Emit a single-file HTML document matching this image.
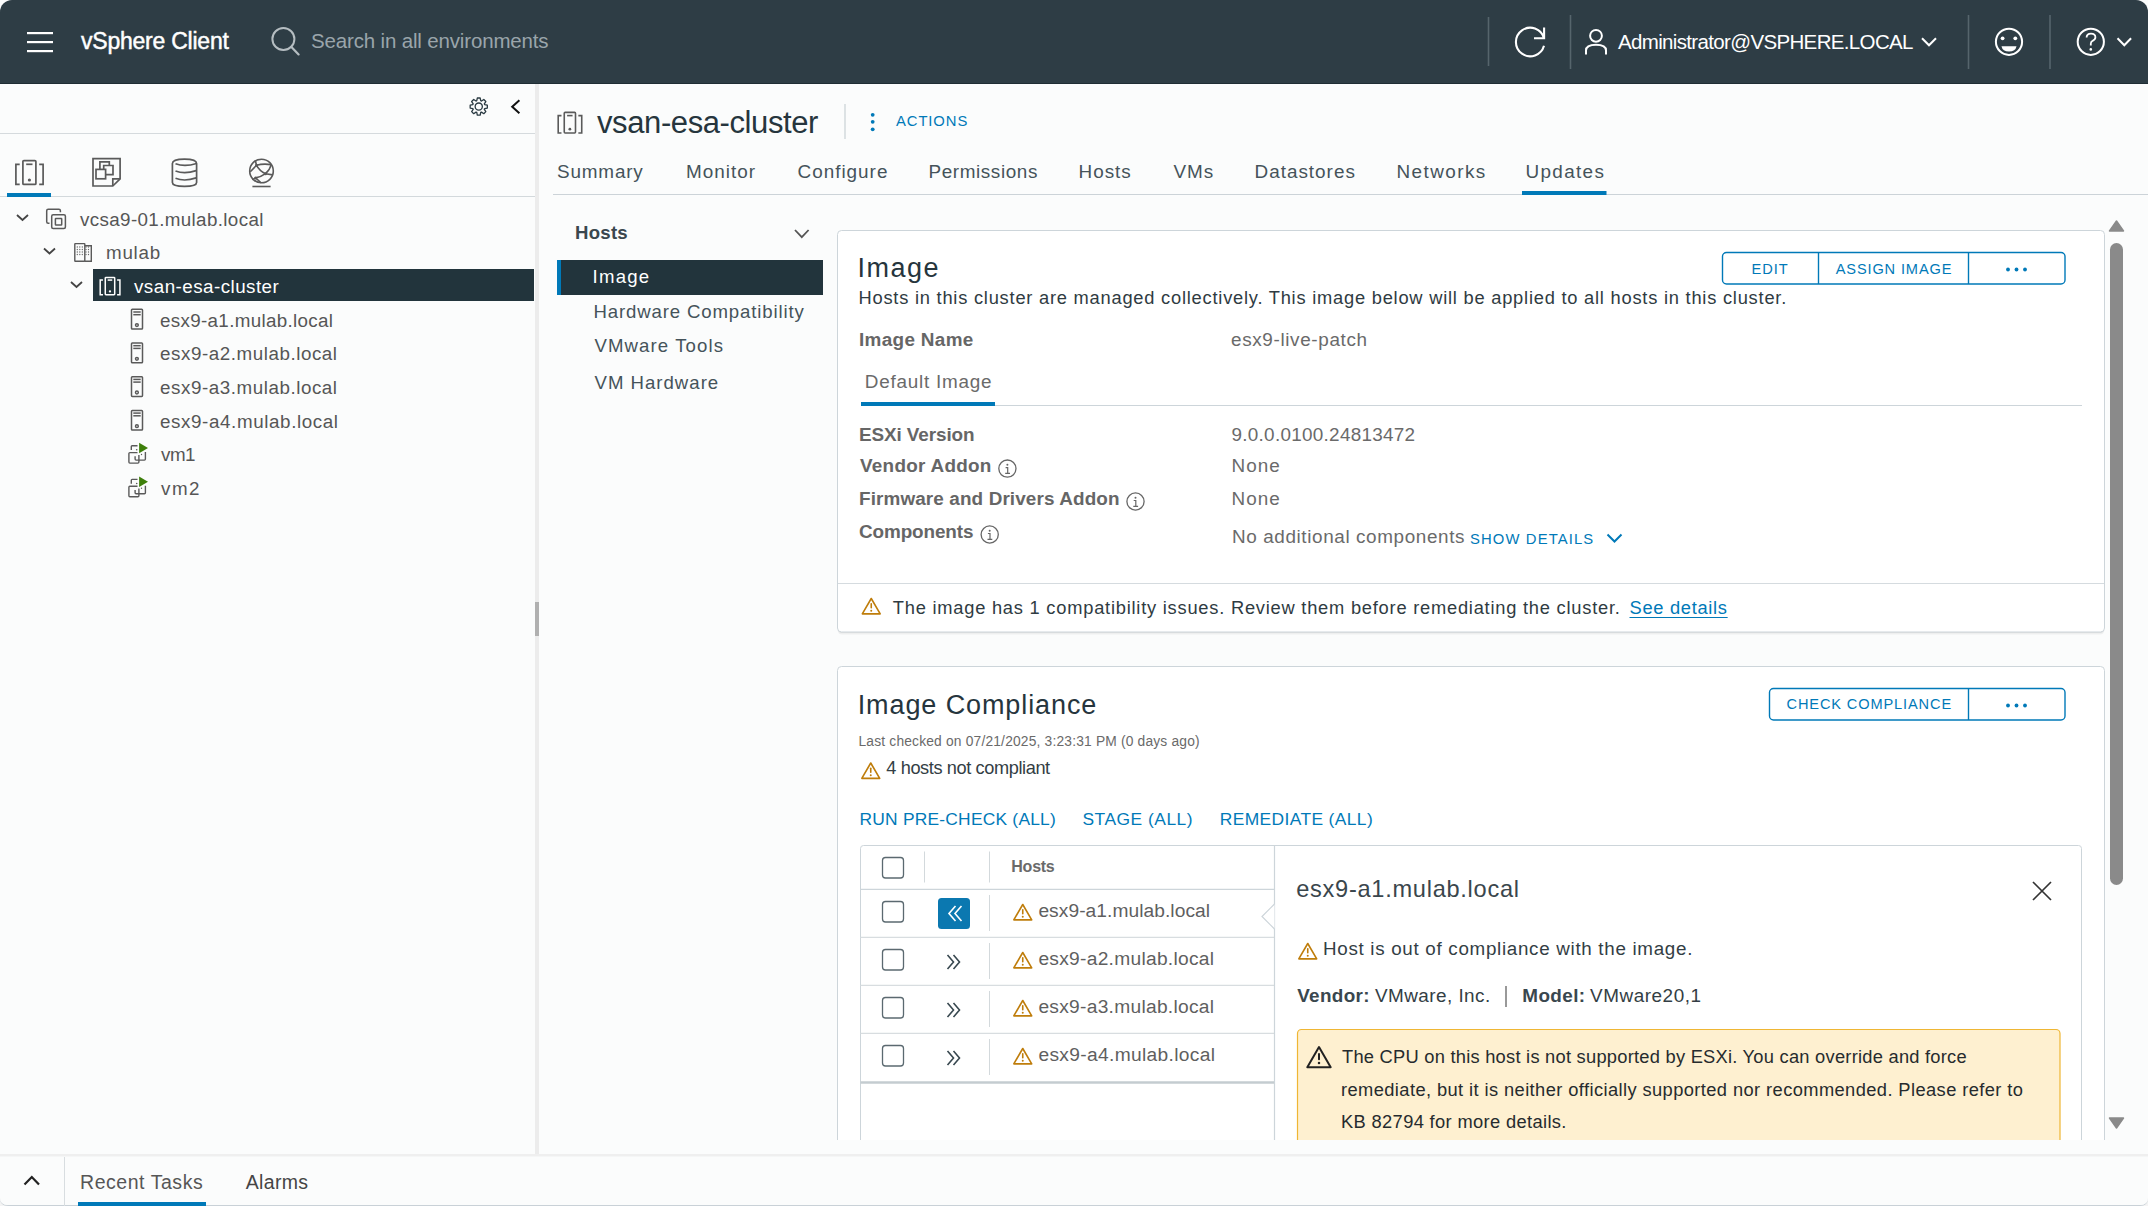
<!DOCTYPE html>
<html><head><meta charset="utf-8"><title>vSphere Client</title>
<style>
html,body{margin:0;padding:0;}
body{width:2148px;height:1206px;overflow:hidden;position:relative;background:#f4f4f4;font-family:"Liberation Sans",sans-serif;}
.t{position:absolute;white-space:nowrap;line-height:1;font-family:"Liberation Sans",sans-serif;}
</style></head><body>
<svg width="2148" height="1206" viewBox="0 0 2148 1206" style="position:absolute;left:0;top:0"><path d="M0 0 H2148 V1198 Q2148 1206 2140 1206 H8 Q0 1206 0 1198 Z" fill="#c9d1d7"/><path d="M0 0 H2148 V1197 Q2148 1205 2140 1205 H8 Q0 1205 0 1197 Z" fill="#fbfcfc"/><path d="M0 84 V12 A12 12 0 0 1 12 0 H2136 A12 12 0 0 1 2148 12 V84 Z" fill="#2e3d45"/><line x1="0" y1="83.5" x2="2148" y2="83.5" stroke="#1f2d34" stroke-width="1" /><rect x="27" y="32" width="26" height="2.2" fill="#fff" /><rect x="27" y="41" width="26" height="2.2" fill="#fff" /><rect x="27" y="50" width="26" height="2.2" fill="#fff" /><circle cx="283.4" cy="39" r="11" stroke="#b5bdc1" stroke-width="2" fill="none"/><line x1="291.2" y1="46.8" x2="298.6" y2="54.4" stroke="#b5bdc1" stroke-width="2.2" stroke-linecap="round"/><line x1="1488.5" y1="17" x2="1488.5" y2="66" stroke="#56656c" stroke-width="1.6" /><line x1="1570.5" y1="15" x2="1570.5" y2="69" stroke="#56656c" stroke-width="1.6" /><line x1="1968.5" y1="15" x2="1968.5" y2="69" stroke="#56656c" stroke-width="1.6" /><line x1="2050" y1="15" x2="2050" y2="69" stroke="#56656c" stroke-width="1.6" /><path d="M1544 45.8 A14.3 14.3 0 1 1 1544 38.2" stroke="#fff" stroke-width="2.1" fill="none" /><path d="M1534 38.2 H1544.1 V27.6" stroke="#fff" stroke-width="2.1" fill="none" /><circle cx="1596" cy="35.8" r="5.9" stroke="#fff" stroke-width="2" fill="none"/><path d="M1586 54.5 V50.5 Q1586 44.8 1596 44.8 Q1606 44.8 1606 50.5 V54.5" stroke="#fff" stroke-width="2" fill="none" /><path d="M1922 38.3 L1929 45.3 L1936 38.3" stroke="#fff" stroke-width="2" fill="none" /><path d="M2117.5 38.3 L2124.3 45.3 L2131.1 38.3" stroke="#fff" stroke-width="2" fill="none" /><circle cx="2009" cy="41.8" r="13.1" stroke="#fff" stroke-width="2" fill="none"/><circle cx="2002.6" cy="38.3" r="1.9" fill="#fff"/><circle cx="2015.3" cy="38.3" r="1.9" fill="#fff"/><path d="M2001.5 46.3 H2016.5 Q2015.5 51.5 2009 51.5 Q2002.5 51.5 2001.5 46.3 Z" stroke="none" stroke-width="0" fill="#fff" /><circle cx="2090.8" cy="41.8" r="13.1" stroke="#fff" stroke-width="2" fill="none"/><path d="M2086.6 37.6 Q2086.6 33.6 2091 33.6 Q2095.4 33.6 2095.4 37.2 Q2095.4 39.6 2092.6 40.8 Q2090.8 41.7 2090.8 43.8 V45.6" stroke="#fff" stroke-width="1.8" fill="none" /><circle cx="2090.8" cy="49.4" r="1.3" fill="#fff"/><line x1="0" y1="133.5" x2="535" y2="133.5" stroke="#d5dadd" stroke-width="1" /><path d="M476.76 100.73 L477.32 98.02 L480.18 98.02 L480.74 100.73 L481.50 101.04 L483.81 99.52 L485.83 101.54 L484.31 103.85 L484.62 104.61 L487.33 105.17 L487.33 108.03 L484.62 108.59 L484.31 109.35 L485.83 111.66 L483.81 113.68 L481.50 112.16 L480.74 112.47 L480.18 115.18 L477.32 115.18 L476.76 112.47 L476.00 112.16 L473.69 113.68 L471.67 111.66 L473.19 109.35 L472.88 108.59 L470.17 108.03 L470.17 105.17 L472.88 104.61 L473.19 103.85 L471.67 101.54 L473.69 99.52 L476.00 101.04 Z" stroke="#2a3a42" stroke-width="1.3" fill="none" stroke-linejoin="round"/><circle cx="478.75" cy="106.6" r="3.6" stroke="#2a3a42" stroke-width="1.3" fill="none"/><path d="M519.4 100.2 L512.2 106.7 L519.4 113.3" stroke="#111" stroke-width="2" fill="none" /><line x1="0" y1="196.5" x2="535" y2="196.5" stroke="#d3d9dc" stroke-width="1" /><rect x="7" y="193" width="44" height="4" fill="#0079b8" /><g transform="translate(15.9 160.6) scale(1.0)" stroke="#5a5a5a" stroke-width="1.7" fill="none" stroke-linecap="butt"><path d="M3.8 3.7 H0 V23.8 H3.8"/><path d="M23.3 3.7 H27.2 V23.8 H23.3"/><rect x="7" y="0" width="13" height="23.8" rx="1"/><line x1="10.3" y1="3.7" x2="16.6" y2="3.7"/><circle cx="13.5" cy="19.4" r="1.6" fill="#5a5a5a" stroke="none"/></g><g stroke="#5a5a5a" stroke-width="1.7" fill="none"><path d="M93 158.6 H120.1 V178.8 L112.8 186 H93 Z"/><path d="M112.8 186 V178.8 H120.1"/><path d="M99.9 169.4 V161.8 H109.3 V165.5"/><path d="M105.6 174.7 H113 V165.5 H103.7 V169.4"/><rect x="96" y="169.4" width="9.6" height="9.4"/></g><g stroke="#5a5a5a" stroke-width="1.7" fill="none"><path d="M172.4 163.5 Q172.4 159.1 184.5 159.1 Q196.6 159.1 196.6 163.5 V182.5 Q196.6 186.4 184.5 186.4 Q172.4 186.4 172.4 182.5 Z"/><path d="M175.5 163.7 Q184.5 167.2 196.6 163.5"/><path d="M175.5 171 Q184.5 174.6 196.2 170.6"/><path d="M175.5 178.3 Q184.5 181.9 196.2 177.9"/></g><g stroke="#5a5a5a" stroke-width="1.6" fill="none"><circle cx="261.5" cy="171" r="11.8"/><path d="M255.3 160.5 L256.5 165.3 L250.3 171.8"/><path d="M256.5 165.3 Q263 163.3 271.2 164.6"/><path d="M256.5 165.3 Q259.5 170.8 265.5 173.7 L272.8 174.9"/><path d="M271.2 164.6 Q269.8 170 265.5 173.7 Q261 177 255.6 177.9 L252.3 179.6"/><path d="M255.6 177.9 L261.3 183"/><line x1="252.4" y1="186.5" x2="270.6" y2="186.5"/></g><circle cx="256.5" cy="165.3" r="1.5" fill="#5a5a5a"/><circle cx="265.5" cy="173.7" r="1.5" fill="#5a5a5a"/><circle cx="255.6" cy="177.9" r="1.5" fill="#5a5a5a"/><rect x="93" y="269" width="441" height="32" fill="#22343c" /><path d="M17.0 215.0 L22.5 220.0 L28.0 215.0" stroke="#444" stroke-width="1.8" fill="none" /><path d="M44.0 248.5 L49.5 253.5 L55.0 248.5" stroke="#444" stroke-width="1.8" fill="none" /><path d="M71.0 282.0 L76.5 287.0 L82.0 282.0" stroke="#444" stroke-width="1.8" fill="none" /><g stroke="#5a5a5a" stroke-width="1.5" fill="none"><path d="M49.5 223.2 H48.2 Q46.7 223.2 46.7 221.7 V210.7 Q46.7 209.2 48.2 209.2 H58.9 Q60.4 209.2 60.4 210.7 V212.2"/><rect x="51.7" y="214.7" width="13.7" height="13.9" rx="1.5"/><rect x="55.4" y="218.4" width="6.3" height="6.7" rx="0.5"/></g><g stroke="#5a5a5a" stroke-width="1.4" fill="none"><rect x="74.8" y="243.6" width="10" height="17.6" rx="0.5"/><path d="M84.8 245.8 H91.3 V261.2 H84.8"/></g><circle cx="77.3" cy="247" r="0.65" fill="#666"/><circle cx="79.8" cy="247" r="0.65" fill="#666"/><circle cx="82.3" cy="247" r="0.65" fill="#666"/><circle cx="86" cy="247" r="0.65" fill="#666"/><circle cx="88.5" cy="247" r="0.65" fill="#666"/><circle cx="77.3" cy="249.5" r="0.65" fill="#666"/><circle cx="79.8" cy="249.5" r="0.65" fill="#666"/><circle cx="82.3" cy="249.5" r="0.65" fill="#666"/><circle cx="86" cy="249.5" r="0.65" fill="#666"/><circle cx="88.5" cy="249.5" r="0.65" fill="#666"/><circle cx="77.3" cy="252" r="0.65" fill="#666"/><circle cx="79.8" cy="252" r="0.65" fill="#666"/><circle cx="82.3" cy="252" r="0.65" fill="#666"/><circle cx="86" cy="252" r="0.65" fill="#666"/><circle cx="88.5" cy="252" r="0.65" fill="#666"/><circle cx="77.3" cy="254.5" r="0.65" fill="#666"/><circle cx="79.8" cy="254.5" r="0.65" fill="#666"/><circle cx="82.3" cy="254.5" r="0.65" fill="#666"/><circle cx="86" cy="254.5" r="0.65" fill="#666"/><circle cx="88.5" cy="254.5" r="0.65" fill="#666"/><g transform="translate(100.2 277.4) scale(0.725)" stroke="#ffffff" stroke-width="2.0689655172413794" fill="none" stroke-linecap="butt"><path d="M3.8 3.7 H0 V23.8 H3.8"/><path d="M23.3 3.7 H27.2 V23.8 H23.3"/><rect x="7" y="0" width="13" height="23.8" rx="1"/><line x1="10.3" y1="3.7" x2="16.6" y2="3.7"/><circle cx="13.5" cy="19.4" r="1.6" fill="#ffffff" stroke="none"/></g><g stroke="#5a5a5a" stroke-width="1.5" fill="none"><rect x="131.5" y="309.3" width="11" height="19.7" rx="0.8"/><line x1="133.3" y1="312.0" x2="140.7" y2="312.0"/><line x1="133.3" y1="314.7" x2="140.7" y2="314.7"/><circle cx="136.9" cy="325.1" r="1.4"/></g><g stroke="#5a5a5a" stroke-width="1.5" fill="none"><rect x="131.5" y="343.0" width="11" height="19.7" rx="0.8"/><line x1="133.3" y1="345.7" x2="140.7" y2="345.7"/><line x1="133.3" y1="348.4" x2="140.7" y2="348.4"/><circle cx="136.9" cy="358.8" r="1.4"/></g><g stroke="#5a5a5a" stroke-width="1.5" fill="none"><rect x="131.5" y="376.70000000000005" width="11" height="19.7" rx="0.8"/><line x1="133.3" y1="379.40000000000003" x2="140.7" y2="379.40000000000003"/><line x1="133.3" y1="382.1" x2="140.7" y2="382.1"/><circle cx="136.9" cy="392.50000000000006" r="1.4"/></g><g stroke="#5a5a5a" stroke-width="1.5" fill="none"><rect x="131.5" y="410.40000000000003" width="11" height="19.7" rx="0.8"/><line x1="133.3" y1="413.1" x2="140.7" y2="413.1"/><line x1="133.3" y1="415.8" x2="140.7" y2="415.8"/><circle cx="136.9" cy="426.20000000000005" r="1.4"/></g><g transform="translate(0 0)"><g stroke="#5a5a5a" stroke-width="1.4" fill="none"><path d="M131.3 450.1 V446.5 Q131.3 445.7 132.1 445.7 H137.5"/><path d="M137.5 452.6 H129.9 Q128.9 452.6 128.9 453.6 V462.1 Q128.9 463.1 129.9 463.1 H137.9 Q138.9 463.1 138.9 462.1 V454.9"/><path d="M135.1 456.2 V459.1 Q135.1 460.1 136.1 460.1 H144.4 Q145.4 460.1 145.4 459.1 V452.1"/></g><circle cx="136.7" cy="449.8" r="0.8" fill="#5a5a5a"/><circle cx="141.5" cy="454.5" r="0.7" fill="#5a5a5a"/><path d="M139.1 442.8 L148 448 L139.1 453.2 Z" fill="#3d7f0a"/></g><g transform="translate(0 33.7)"><g stroke="#5a5a5a" stroke-width="1.4" fill="none"><path d="M131.3 450.1 V446.5 Q131.3 445.7 132.1 445.7 H137.5"/><path d="M137.5 452.6 H129.9 Q128.9 452.6 128.9 453.6 V462.1 Q128.9 463.1 129.9 463.1 H137.9 Q138.9 463.1 138.9 462.1 V454.9"/><path d="M135.1 456.2 V459.1 Q135.1 460.1 136.1 460.1 H144.4 Q145.4 460.1 145.4 459.1 V452.1"/></g><circle cx="136.7" cy="449.8" r="0.8" fill="#5a5a5a"/><circle cx="141.5" cy="454.5" r="0.7" fill="#5a5a5a"/><path d="M139.1 442.8 L148 448 L139.1 453.2 Z" fill="#3d7f0a"/></g><rect x="535" y="84" width="4" height="1071" fill="#ececec" /><rect x="535" y="602" width="4" height="34" fill="#b0b0b0" /><g transform="translate(558.2 112.4) scale(0.865)" stroke="#5a5a5a" stroke-width="1.8497109826589597" fill="none" stroke-linecap="butt"><path d="M3.8 3.7 H0 V23.8 H3.8"/><path d="M23.3 3.7 H27.2 V23.8 H23.3"/><rect x="7" y="0" width="13" height="23.8" rx="1"/><line x1="10.3" y1="3.7" x2="16.6" y2="3.7"/><circle cx="13.5" cy="19.4" r="1.6" fill="#5a5a5a" stroke="none"/></g><line x1="845" y1="104" x2="845" y2="139" stroke="#c9d0d4" stroke-width="1.2" /><circle cx="872.7" cy="114.8" r="1.9" fill="#0079b8"/><circle cx="872.7" cy="121.8" r="1.9" fill="#0079b8"/><circle cx="872.7" cy="129.3" r="1.9" fill="#0079b8"/><line x1="553" y1="194.5" x2="2148" y2="194.5" stroke="#ccd3d8" stroke-width="1.2" /><rect x="1522" y="191" width="84.5" height="4" fill="#0079b8" /><path d="M795 230 L801.8 237.2 L808.6 230" stroke="#555" stroke-width="1.8" fill="none" /><rect x="557" y="260" width="266" height="35" fill="#22343c" /><rect x="557" y="260" width="4" height="35" fill="#0079b8" /><rect x="838" y="233" width="1266" height="401.5" rx="4" fill="#000" opacity="0.05"/><rect x="838" y="232" width="1266" height="401" rx="4" fill="#000" opacity="0.06"/><rect x="837.5" y="230.5" width="1267" height="401.5" rx="4" fill="#fff" stroke="#cdd5da" stroke-width="1"/><rect x="1722.5" y="252.5" width="342.5" height="31.5" rx="4" fill="#fff" stroke="#0079b8" stroke-width="1.4"/><line x1="1818.5" y1="252.5" x2="1818.5" y2="284" stroke="#0079b8" stroke-width="1.4" /><line x1="1968.5" y1="252.5" x2="1968.5" y2="284" stroke="#0079b8" stroke-width="1.4" /><circle cx="2008" cy="269.5" r="1.9" fill="#0079b8"/><circle cx="2016.5" cy="269.5" r="1.9" fill="#0079b8"/><circle cx="2025" cy="269.5" r="1.9" fill="#0079b8"/><line x1="861" y1="405.5" x2="2082" y2="405.5" stroke="#cdd5da" stroke-width="1" /><rect x="861" y="402" width="134" height="4" fill="#0079b8" /><circle cx="1007.4" cy="468.6" r="8.6" stroke="#666" stroke-width="1.3" fill="none"/><circle cx="1007.4" cy="464.8" r="1" fill="#666"/><path d="M1005.6 467.6 H1007.6999999999999 V473.40000000000003 M1005.1999999999999 473.40000000000003 H1010.0" stroke="#666" stroke-width="1.2" fill="none" /><circle cx="1135.5" cy="501.5" r="8.6" stroke="#666" stroke-width="1.3" fill="none"/><circle cx="1135.5" cy="497.7" r="1" fill="#666"/><path d="M1133.7 500.5 H1135.8 V506.3 M1133.3 506.3 H1138.1" stroke="#666" stroke-width="1.2" fill="none" /><circle cx="989.7" cy="534.5" r="8.6" stroke="#666" stroke-width="1.3" fill="none"/><circle cx="989.7" cy="530.7" r="1" fill="#666"/><path d="M987.9000000000001 533.5 H990.0 V539.3 M987.5 539.3 H992.3000000000001" stroke="#666" stroke-width="1.2" fill="none" /><path d="M1607.5 534.5 L1614.5 541.5 L1621.5 534.5" stroke="#0079b8" stroke-width="2" fill="none" /><line x1="838" y1="583.5" x2="2104" y2="583.5" stroke="#d5dbdf" stroke-width="1" /><g stroke="#bf7d0b" stroke-width="1.6" fill="none" stroke-linejoin="round" stroke-linecap="round"><path d="M871.25 598.5 L880.2 613.86 H862.3 Z"/><line x1="871.25" y1="603.6776" x2="871.25" y2="607.796"/></g><circle cx="871.25" cy="610.7132" r="0.992" fill="#bf7d0b"/><rect x="838" y="668" width="1266" height="480" rx="4" fill="#000" opacity="0.06"/><rect x="837.5" y="666.5" width="1267" height="480" rx="4" fill="#fff" stroke="#cdd5da" stroke-width="1"/><rect x="1769.5" y="688.5" width="295.5" height="31.5" rx="4" fill="#fff" stroke="#0079b8" stroke-width="1.4"/><line x1="1968.5" y1="688.5" x2="1968.5" y2="720" stroke="#0079b8" stroke-width="1.4" /><circle cx="2008" cy="705.5" r="1.9" fill="#0079b8"/><circle cx="2016.5" cy="705.5" r="1.9" fill="#0079b8"/><circle cx="2025" cy="705.5" r="1.9" fill="#0079b8"/><g stroke="#bf7d0b" stroke-width="1.6" fill="none" stroke-linejoin="round" stroke-linecap="round"><path d="M870.75 763 L879.7 778.36 H861.8 Z"/><line x1="870.75" y1="768.1776" x2="870.75" y2="772.296"/></g><circle cx="870.75" cy="775.2132" r="0.992" fill="#bf7d0b"/><rect x="860.5" y="845.5" width="1221" height="300" rx="3" fill="#fff" stroke="#cdd5da" stroke-width="1"/><line x1="860.5" y1="889.3" x2="1274" y2="889.3" stroke="#cdd5da" stroke-width="1.2" /><line x1="860.5" y1="937.3" x2="1274" y2="937.3" stroke="#d8dde0" stroke-width="1.2" /><line x1="860.5" y1="985.3" x2="1274" y2="985.3" stroke="#d8dde0" stroke-width="1.2" /><line x1="860.5" y1="1033.3" x2="1274" y2="1033.3" stroke="#d8dde0" stroke-width="1.2" /><line x1="860.5" y1="1082.5" x2="1274" y2="1082.5" stroke="#c4ccd0" stroke-width="2.4" /><line x1="924.5" y1="851.5" x2="924.5" y2="882.5" stroke="#d3d9dc" stroke-width="1" /><line x1="989.5" y1="851.5" x2="989.5" y2="882.5" stroke="#d3d9dc" stroke-width="1" /><line x1="989.5" y1="895" x2="989.5" y2="931" stroke="#d3d9dc" stroke-width="1" /><line x1="989.5" y1="943" x2="989.5" y2="979" stroke="#d3d9dc" stroke-width="1" /><line x1="989.5" y1="991" x2="989.5" y2="1027" stroke="#d3d9dc" stroke-width="1" /><line x1="989.5" y1="1039" x2="989.5" y2="1075" stroke="#d3d9dc" stroke-width="1" /><rect x="882.5" y="857.5" width="21" height="20.5" rx="3" fill="#fff" stroke="#5b6970" stroke-width="1.3"/><rect x="882.5" y="901.5" width="21" height="20.5" rx="3" fill="#fff" stroke="#5b6970" stroke-width="1.3"/><rect x="882.5" y="949.5" width="21" height="20.5" rx="3" fill="#fff" stroke="#5b6970" stroke-width="1.3"/><rect x="882.5" y="997.5" width="21" height="20.5" rx="3" fill="#fff" stroke="#5b6970" stroke-width="1.3"/><rect x="882.5" y="1045.5" width="21" height="20.5" rx="3" fill="#fff" stroke="#5b6970" stroke-width="1.3"/><rect x="938" y="898" width="32" height="31" rx="3.5" fill="#0b78b0"/><path d="M955.5 906 L949 913.5 L955.5 921 M961.5 906 L955 913.5 L961.5 921" stroke="#fff" stroke-width="1.6" fill="none" /><path d="M947.5 955 L953.5 962 L947.5 969 M953.5 955 L959.5 962 L953.5 969" stroke="#37474f" stroke-width="1.6" fill="none" /><path d="M947.5 1003 L953.5 1010 L947.5 1017 M953.5 1003 L959.5 1010 L953.5 1017" stroke="#37474f" stroke-width="1.6" fill="none" /><path d="M947.5 1051 L953.5 1058 L947.5 1065 M953.5 1051 L959.5 1058 L953.5 1065" stroke="#37474f" stroke-width="1.6" fill="none" /><g stroke="#bf7d0b" stroke-width="1.6" fill="none" stroke-linejoin="round" stroke-linecap="round"><path d="M1022.75 904.5 L1031.7 919.86 H1013.8 Z"/><line x1="1022.75" y1="909.6776" x2="1022.75" y2="913.796"/></g><circle cx="1022.75" cy="916.7132" r="0.992" fill="#bf7d0b"/><g stroke="#bf7d0b" stroke-width="1.6" fill="none" stroke-linejoin="round" stroke-linecap="round"><path d="M1022.75 952.5 L1031.7 967.86 H1013.8 Z"/><line x1="1022.75" y1="957.6776" x2="1022.75" y2="961.796"/></g><circle cx="1022.75" cy="964.7132" r="0.992" fill="#bf7d0b"/><g stroke="#bf7d0b" stroke-width="1.6" fill="none" stroke-linejoin="round" stroke-linecap="round"><path d="M1022.75 1000.5 L1031.7 1015.86 H1013.8 Z"/><line x1="1022.75" y1="1005.6776" x2="1022.75" y2="1009.796"/></g><circle cx="1022.75" cy="1012.7132" r="0.992" fill="#bf7d0b"/><g stroke="#bf7d0b" stroke-width="1.6" fill="none" stroke-linejoin="round" stroke-linecap="round"><path d="M1022.75 1048.5 L1031.7 1063.8600000000001 H1013.8 Z"/><line x1="1022.75" y1="1053.6776" x2="1022.75" y2="1057.796"/></g><circle cx="1022.75" cy="1060.7132" r="0.992" fill="#bf7d0b"/><line x1="1274.5" y1="845.5" x2="1274.5" y2="1146" stroke="#cdd5da" stroke-width="1.2" /><path d="M1274.5 904 L1262 916.5 L1274.5 929" fill="#fff" stroke="#cdd5da" stroke-width="1.2"/><path d="M2033 882 L2051 900 M2051 882 L2033 900" stroke="#333" stroke-width="1.7" fill="none" /><g stroke="#bf7d0b" stroke-width="1.6" fill="none" stroke-linejoin="round" stroke-linecap="round"><path d="M1307.75 943.5 L1316.7 958.86 H1298.8 Z"/><line x1="1307.75" y1="948.6776" x2="1307.75" y2="952.796"/></g><circle cx="1307.75" cy="955.7132" r="0.992" fill="#bf7d0b"/><line x1="1506" y1="986" x2="1506" y2="1007" stroke="#777" stroke-width="1.5" /><rect x="1297.5" y="1029.5" width="762.5" height="116" rx="4" fill="#fef0d0" stroke="#efb634" stroke-width="1.2"/><g stroke="#222" stroke-width="2" fill="none" stroke-linejoin="round" stroke-linecap="round"><path d="M1319.0 1047 L1330.7 1067.2 H1307.3 Z"/><line x1="1319.0" y1="1053.92" x2="1319.0" y2="1059.2"/></g><circle cx="1319.0" cy="1062.94" r="1.24" fill="#222"/><rect x="539" y="1140" width="1609" height="14" fill="#fbfcfc" /><path d="M0 1156 H2148 V1197 Q2148 1205 2140 1205 H8 Q0 1205 0 1197 Z" fill="#fbfcfc"/><path d="M2116.5 221 L2123.5 231 H2109.5 Z" fill="#8a8a8a" stroke="#8a8a8a" stroke-width="1.5" stroke-linejoin="round"/><rect x="2110" y="243" width="13" height="642" rx="6.5" fill="#8a8a8a"/><path d="M2116.5 1128 L2123.5 1118 H2109.5 Z" fill="#8a8a8a" stroke="#8a8a8a" stroke-width="1.5" stroke-linejoin="round"/><rect x="0" y="1154" width="2148" height="2.5" fill="#efefef" /><line x1="64.5" y1="1157" x2="64.5" y2="1206" stroke="#d8dde0" stroke-width="1" /><path d="M24.5 1184.5 L31.8 1177 L39 1184.5" stroke="#222" stroke-width="2.2" fill="none" /><rect x="78" y="1202" width="128" height="4" fill="#0079b8" /></svg>
<div class="t" style="left:81.00px;top:29.53px;font-size:23px;letter-spacing:-0.231px;color:#ffffff;-webkit-text-stroke:0.45px #fff">vSphere Client</div><div class="t" style="left:311.00px;top:30.85px;font-size:20.5px;letter-spacing:-0.16px;color:#9aa5ab;">Search in all environments</div><div class="t" style="left:1618.00px;top:32.15px;font-size:20.5px;letter-spacing:-0.654px;color:#ffffff;">Administrator@VSPHERE.LOCAL</div><div class="t" style="left:80.00px;top:210.69px;font-size:18.8px;letter-spacing:0.368px;color:#565656;">vcsa9-01.mulab.local</div><div class="t" style="left:106.00px;top:244.19px;font-size:18.8px;letter-spacing:0.75px;color:#565656;">mulab</div><div class="t" style="left:134.00px;top:277.69px;font-size:18.8px;letter-spacing:0.467px;color:#ffffff;">vsan-esa-cluster</div><div class="t" style="left:160.00px;top:311.69px;font-size:18.8px;letter-spacing:0.333px;color:#565656;">esx9-a1.mulab.local</div><div class="t" style="left:160.00px;top:345.39px;font-size:18.8px;letter-spacing:0.556px;color:#565656;">esx9-a2.mulab.local</div><div class="t" style="left:160.00px;top:379.09px;font-size:18.8px;letter-spacing:0.556px;color:#565656;">esx9-a3.mulab.local</div><div class="t" style="left:160.00px;top:412.79px;font-size:18.8px;letter-spacing:0.611px;color:#565656;">esx9-a4.mulab.local</div><div class="t" style="left:161.00px;top:446.19px;font-size:18.8px;letter-spacing:-0.5px;color:#565656;">vm1</div><div class="t" style="left:161.00px;top:479.69px;font-size:18.8px;letter-spacing:1.5px;color:#565656;">vm2</div><div class="t" style="left:597.00px;top:106.86px;font-size:31px;letter-spacing:-0.4px;color:#26353d;">vsan-esa-cluster</div><div class="t" style="left:896.00px;top:114.07px;font-size:14.8px;letter-spacing:0.917px;color:#0079b8;">ACTIONS</div><div class="t" style="left:557.00px;top:162.60px;font-size:18.9px;letter-spacing:0.833px;color:#45535a;">Summary</div><div class="t" style="left:686.00px;top:162.60px;font-size:18.9px;letter-spacing:1.0px;color:#45535a;">Monitor</div><div class="t" style="left:797.50px;top:162.60px;font-size:18.9px;letter-spacing:1.0px;color:#45535a;">Configure</div><div class="t" style="left:928.50px;top:162.60px;font-size:18.9px;letter-spacing:0.6px;color:#45535a;">Permissions</div><div class="t" style="left:1078.50px;top:162.60px;font-size:18.9px;letter-spacing:1.0px;color:#45535a;">Hosts</div><div class="t" style="left:1173.50px;top:162.60px;font-size:18.9px;letter-spacing:1.0px;color:#45535a;">VMs</div><div class="t" style="left:1254.50px;top:162.60px;font-size:18.9px;letter-spacing:1.0px;color:#45535a;">Datastores</div><div class="t" style="left:1396.50px;top:162.60px;font-size:18.9px;letter-spacing:1.429px;color:#45535a;">Networks</div><div class="t" style="left:1525.50px;top:162.60px;font-size:18.9px;letter-spacing:1.333px;color:#45535a;">Updates</div><div class="t" style="left:575.00px;top:223.86px;font-size:18.6px;letter-spacing:0.25px;color:#3a474e;font-weight:bold;">Hosts</div><div class="t" style="left:592.50px;top:267.86px;font-size:18.6px;letter-spacing:1.25px;color:#ffffff;">Image</div><div class="t" style="left:593.50px;top:302.86px;font-size:18.6px;letter-spacing:0.857px;color:#45535a;">Hardware Compatibility</div><div class="t" style="left:594.50px;top:337.46px;font-size:18.6px;letter-spacing:1.091px;color:#45535a;">VMware Tools</div><div class="t" style="left:594.50px;top:373.66px;font-size:18.6px;letter-spacing:1.0px;color:#45535a;">VM Hardware</div><div class="t" style="left:857.50px;top:255.24px;font-size:27px;letter-spacing:1.5px;color:#26353d;">Image</div><div class="t" style="left:1751.50px;top:261.54px;font-size:14.6px;letter-spacing:1.0px;color:#0079b8;">EDIT</div><div class="t" style="left:1835.70px;top:261.54px;font-size:14.6px;letter-spacing:0.864px;color:#0079b8;">ASSIGN IMAGE</div><div class="t" style="left:858.50px;top:289.11px;font-size:18.3px;letter-spacing:0.771px;color:#2f3b42;">Hosts in this cluster are managed collectively. This image below will be applied to all hosts in this cluster.</div><div class="t" style="left:859.00px;top:331.10px;font-size:18.9px;letter-spacing:0.333px;color:#666666;font-weight:bold;">Image Name</div><div class="t" style="left:1231.00px;top:330.90px;font-size:18.9px;letter-spacing:0.643px;color:#6a6a6a;">esx9-live-patch</div><div class="t" style="left:864.80px;top:372.90px;font-size:18.9px;letter-spacing:0.75px;color:#6a6a6a;">Default Image</div><div class="t" style="left:859.00px;top:425.60px;font-size:18.9px;letter-spacing:-0.091px;color:#666666;font-weight:bold;">ESXi Version</div><div class="t" style="left:1231.50px;top:425.60px;font-size:18.9px;letter-spacing:0.278px;color:#6a6a6a;">9.0.0.0100.24813472</div><div class="t" style="left:860.00px;top:457.30px;font-size:18.9px;letter-spacing:0.273px;color:#666666;font-weight:bold;">Vendor Addon</div><div class="t" style="left:1231.50px;top:457.30px;font-size:18.9px;letter-spacing:1.0px;color:#6a6a6a;">None</div><div class="t" style="left:859.00px;top:490.40px;font-size:18.9px;letter-spacing:0.12px;color:#666666;font-weight:bold;">Firmware and Drivers Addon</div><div class="t" style="left:1231.50px;top:490.40px;font-size:18.9px;letter-spacing:1.0px;color:#6a6a6a;">None</div><div class="t" style="left:859.00px;top:523.40px;font-size:18.9px;letter-spacing:-0.111px;color:#666666;font-weight:bold;">Components</div><div class="t" style="left:1232.00px;top:528.40px;font-size:18.9px;letter-spacing:0.609px;color:#6a6a6a;">No additional components</div><div class="t" style="left:1470.00px;top:532.27px;font-size:14.8px;letter-spacing:1.136px;color:#0079b8;">SHOW DETAILS</div><div class="t" style="left:892.80px;top:598.71px;font-size:18.3px;letter-spacing:0.769px;color:#2f3b42;">The image has 1 compatibility issues. Review them before remediating the cluster.</div><div class="t" style="left:1629.50px;top:598.71px;font-size:18.3px;letter-spacing:0.7px;color:#0079b8;text-decoration:underline;text-underline-offset:3px">See details</div><div class="t" style="left:857.70px;top:691.64px;font-size:27px;letter-spacing:0.9px;color:#26353d;">Image Compliance</div><div class="t" style="left:1786.50px;top:696.84px;font-size:14.6px;letter-spacing:0.867px;color:#0079b8;">CHECK COMPLIANCE</div><div class="t" style="left:858.50px;top:735.42px;font-size:13.8px;letter-spacing:0.18px;color:#6a6a6a;">Last checked on 07/21/2025, 3:23:31 PM (0 days ago)</div><div class="t" style="left:886.30px;top:759.29px;font-size:18.2px;letter-spacing:-0.4px;color:#333e44;">4 hosts not compliant</div><div class="t" style="left:859.50px;top:810.87px;font-size:17.4px;letter-spacing:0.222px;color:#0079b8;">RUN PRE-CHECK (ALL)</div><div class="t" style="left:1082.50px;top:810.87px;font-size:17.4px;letter-spacing:0.5px;color:#0079b8;">STAGE (ALL)</div><div class="t" style="left:1219.70px;top:810.87px;font-size:17.4px;letter-spacing:0.393px;color:#0079b8;">REMEDIATE (ALL)</div><div class="t" style="left:1011.30px;top:858.56px;font-size:16px;letter-spacing:-0.25px;color:#6a6a6a;font-weight:bold;">Hosts</div><div class="t" style="left:1038.40px;top:901.45px;font-size:19.2px;letter-spacing:0.056px;color:#5f5f5f;">esx9-a1.mulab.local</div><div class="t" style="left:1038.40px;top:949.45px;font-size:19.2px;letter-spacing:0.278px;color:#5f5f5f;">esx9-a2.mulab.local</div><div class="t" style="left:1038.40px;top:997.45px;font-size:19.2px;letter-spacing:0.278px;color:#5f5f5f;">esx9-a3.mulab.local</div><div class="t" style="left:1038.40px;top:1045.45px;font-size:19.2px;letter-spacing:0.333px;color:#5f5f5f;">esx9-a4.mulab.local</div><div class="t" style="left:1296.20px;top:877.82px;font-size:23.6px;letter-spacing:0.722px;color:#3a464c;">esx9-a1.mulab.local</div><div class="t" style="left:1323.00px;top:940.49px;font-size:18.8px;letter-spacing:0.7px;color:#333e44;">Host is out of compliance with the image.</div><div class="t" style="left:1297.20px;top:987.10px;font-size:18.9px;letter-spacing:0.333px;color:#3a474e;font-weight:bold;">Vendor:</div><div class="t" style="left:1375.00px;top:987.10px;font-size:18.9px;letter-spacing:0.455px;color:#333e44;">VMware, Inc.</div><div class="t" style="left:1522.30px;top:987.10px;font-size:18.9px;letter-spacing:0.4px;color:#3a474e;font-weight:bold;">Model:</div><div class="t" style="left:1590.00px;top:987.10px;font-size:18.9px;letter-spacing:0.556px;color:#333e44;">VMware20,1</div><div class="t" style="left:1342.00px;top:1048.31px;font-size:18.3px;letter-spacing:0.25px;color:#262b2e;">The CPU on this host is not supported by ESXi. You can override and force</div><div class="t" style="left:1341.00px;top:1080.61px;font-size:18.3px;letter-spacing:0.407px;color:#262b2e;">remediate, but it is neither officially supported nor recommended. Please refer to</div><div class="t" style="left:1341.00px;top:1113.21px;font-size:18.3px;letter-spacing:0.36px;color:#262b2e;">KB 82794 for more details.</div><div class="t" style="left:80.00px;top:1173.49px;font-size:19.5px;letter-spacing:0.545px;color:#565656;">Recent Tasks</div><div class="t" style="left:245.80px;top:1173.49px;font-size:19.5px;letter-spacing:0.3px;color:#454545;">Alarms</div>
</body></html>
